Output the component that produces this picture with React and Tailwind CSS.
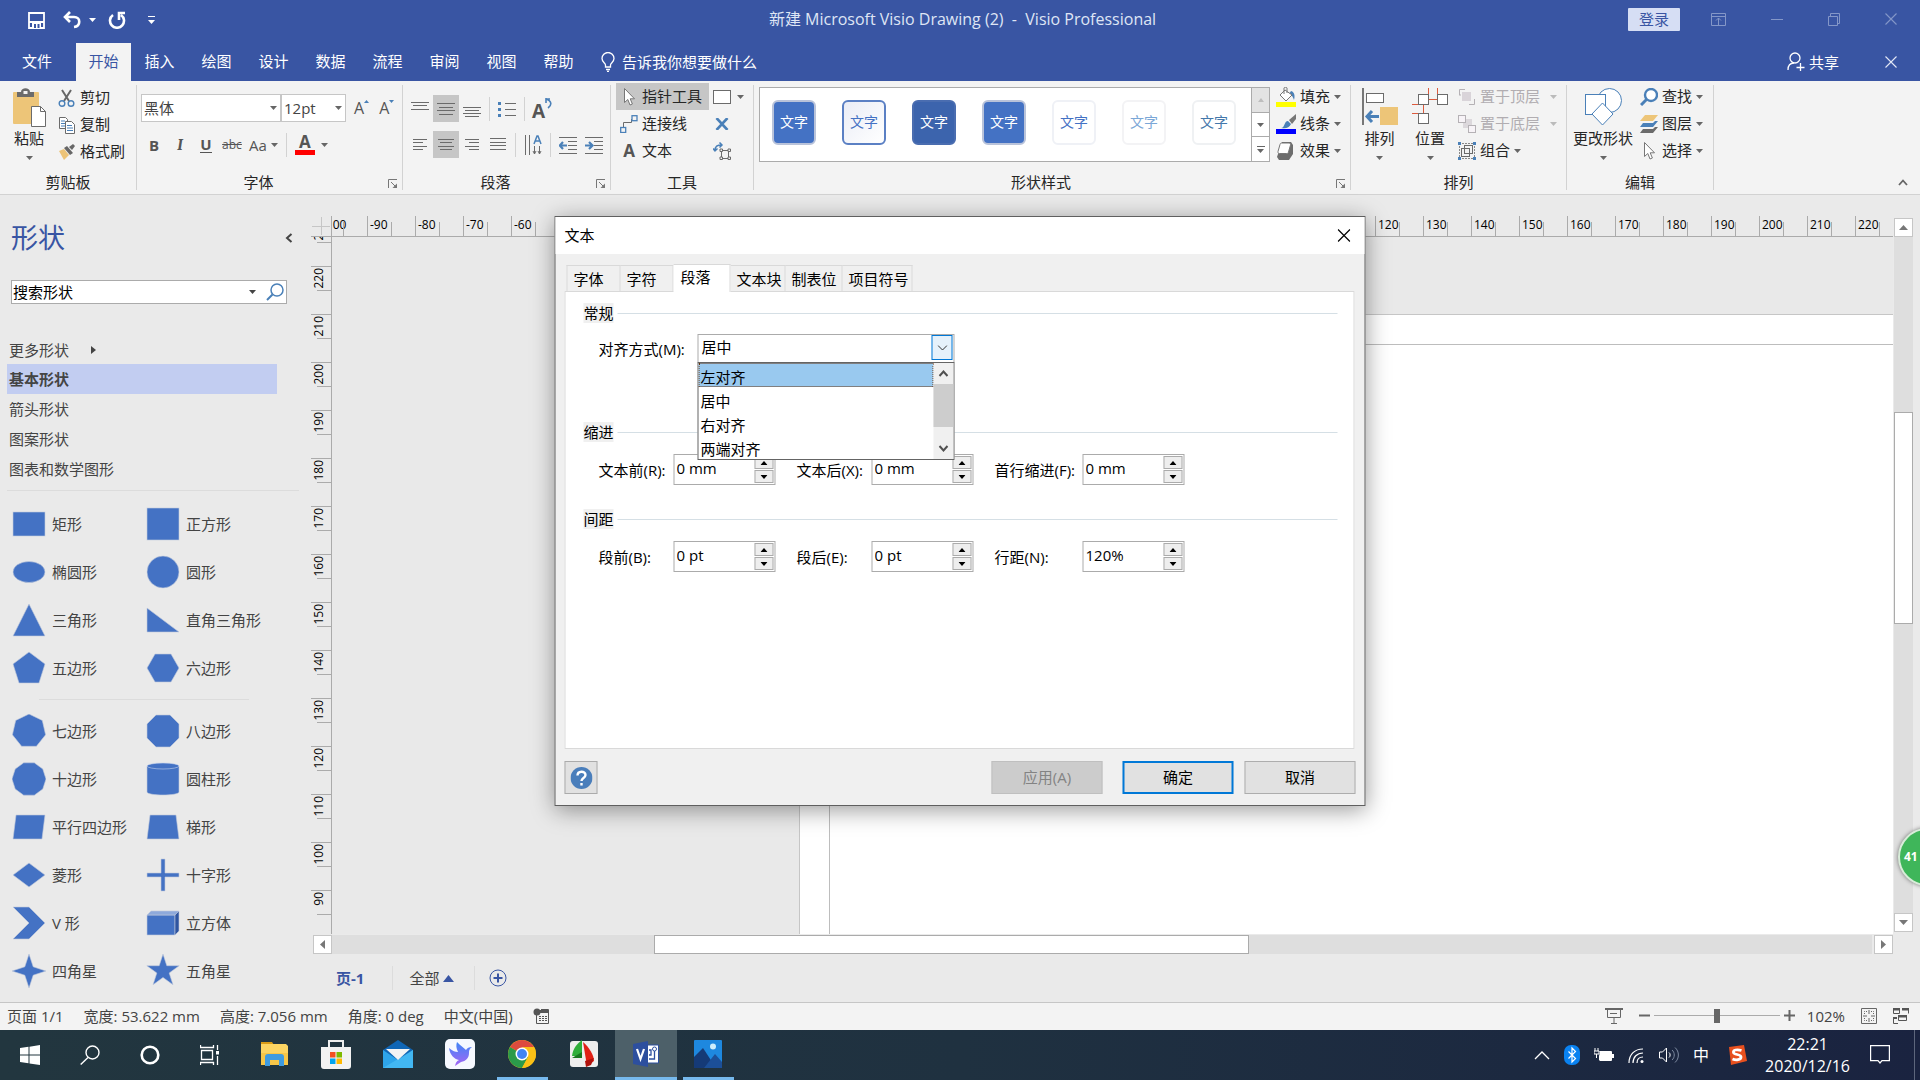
import React, { useState } from 'react';

const BLUE = '#4472c4';

// Small down arrow used all over the ribbon
const Caret = ({ color = '#666' }) => (
  <svg width="7" height="4" viewBox="0 0 7 4" className="shrink-0">
    <path d="M0 0h7L3.5 4z" fill={color} />
  </svg>
);

const Svg = ({ w = 18, h = 18, vb, children, className = '' }) => (
  <svg width={w} height={h} viewBox={vb || `0 0 ${w} ${h}`} fill="none" className={`shrink-0 ${className}`}>
    {children}
  </svg>
);

// --- Ribbon icons ---
const ScissorsIcon = () => (
  <Svg>
    <path d="M4 1l7 11M13 1L6 12" stroke="#666" strokeWidth="2" />
    <circle cx="4" cy="14.5" r="2.8" stroke="#4a80b8" strokeWidth="1.4" />
    <circle cx="13" cy="14.5" r="2.8" stroke="#4a80b8" strokeWidth="1.4" />
  </Svg>
);

const CopyIcon = () => (
  <Svg>
    <path d="M1.5 1.5h6l2 2v9h-8z" fill="#fff" stroke="#6b6b6b" />
    <path d="M3 5h4M3 7.5h4M3 10h4" stroke="#4a80b8" />
    <path d="M7.5 5.5h6l3 3v9h-9z" fill="#fff" stroke="#6b6b6b" />
    <path d="M9 9.5h5M9 12h6M9 14.5h6" stroke="#4a80b8" />
  </Svg>
);

const BrushIcon = () => (
  <Svg>
    <path d="M1 8l5-2 5 6-5 5z" fill="#ecc377" />
    <path d="M6 5l3-2 6 7-3 2z" fill="#666" />
    <path d="M11 4l4-3 2 2-3 4z" fill="#666" />
  </Svg>
);

const PasteIcon = () => (
  <Svg w={36} h={40}>
    <rect x="2" y="4" width="26" height="32" rx="1" fill="#edc578" />
    <path d="M6 4h4c0-5 9-5 9 0h4v5H6z" fill="#6b6b6b" />
    <rect x="12.5" y="3" width="4" height="3" fill="#f3f3f3" />
    <path d="M20.5 18.5h9l5 5v15h-14z" fill="#fff" stroke="#6b6b6b" />
    <path d="M29.5 18.5v5h5" stroke="#6b6b6b" />
  </Svg>
);

const LauncherIcon = () => (
  <Svg w={10} h={10}>
    <path d="M.5 9V.5H9" stroke="#777" />
    <path d="M3 3l4 4" stroke="#777" />
    <path d="M9 4.5V9H4.5z" fill="#777" />
  </Svg>
);

// Text lines: each entry is [x, y, width]
const Lines = ({ rows }) => (
  <Svg>
    <path d={rows.map(([x, y, w]) => `M${x} ${y}.5h${w}`).join('')} stroke="#6b6b6b" />
  </Svg>
);

const BulletsIcon = () => (
  <Svg>
    <path d="M7 3.5h11M7 9.5h11M7 15.5h11" stroke="#6b6b6b" />
    <path d="M0 2h3v3H0zM0 8h3v3H0zM0 14h3v3H0z" fill="#4a80b8" />
  </Svg>
);

const RotateTextIcon = () => (
  <span className="flex items-start">
    <span className="text-[19px] leading-5 pt-1 font-bold text-[#555]">A</span>
    <Svg w={7} h={12}>
      <path d="M1 1v5M1 2h4M1 2c6 2 6 6 2 9" stroke="#4a80b8" strokeWidth="1.6" />
    </Svg>
  </span>
);

const VerticalTextIcon = () => (
  <Svg w={18} h={20}>
    <path d="M1.5 0v20M5.5 0v20M10.5 11v8M15.5 11v8M9 16l1.5 3 1.5-3M14 16l1.5 3 1.5-3" stroke="#6b6b6b" />
    <path d="M10 9l3-8h1l3 8M11.5 6h4" stroke="#4a80b8" strokeWidth="1.5" />
  </Svg>
);

const IndentIcon = ({ right }) => (
  <Svg>
    <path d="M0 1.5h18M9 5.5h9M9 9.5h9M9 13.5h9M0 17.5h18" stroke="#6b6b6b" />
    <path d={right ? 'M0 9.5h7M4 6l3.5 3.5L4 13' : 'M1 9.5h7M4 6L.8 9.5 4 13'} stroke="#4a80b8" strokeWidth="2.2" />
  </Svg>
);

const PointerIcon = () => (
  <Svg w={18} h={20}>
    <path d="M4.5 1.5v14l3.3-3 2.2 5.5 2.4-1-2.2-5.2h4.3z" fill="#fff" stroke="#777" />
  </Svg>
);

const ConnectorIcon = () => (
  <Svg>
    <path d="M3.5 12V7.5h8V4" stroke="#6b6b6b" />
    <rect x=".7" y="12.5" width="5" height="5" stroke="#4a80b8" strokeWidth="1.3" />
    <rect x="12" y=".7" width="5" height="5" stroke="#4a80b8" strokeWidth="1.3" />
  </Svg>
);

const TransformIcon = () => (
  <Svg>
    <rect x="8.5" y="8.5" width="7" height="8" stroke="#6b6b6b" />
    <path d="M7 7h2.500v2.500H7zM15 7h2.500v2.500H15zM7 15h2.500v2.500H7zM15 15h2.500v2.500H15z" fill="#f3f3f3" stroke="#6b6b6b" />
    <path d="M2 9C2 4 4 3 9 3M6.5.5L9 3 6.5 5.5M0 6.5L2 9l2.5-2.5" stroke="#4a80b8" strokeWidth="1.5" />
  </Svg>
);

const FillIcon = () => (
  <Svg w={20} h={20}>
    <rect y="15" width="20" height="5" fill="#ffff00" />
    <path d="M15 4c4 1 4 6 3 9-1-3-2-5-5-6z" fill="#4a80b8" />
    <path d="M9 3l7 5-6 6-6-6z" fill="#fff" stroke="#777" />
    <path d="M8 7V1c0-1 3-1 3 0v5" stroke="#777" />
  </Svg>
);

const LineIcon = () => (
  <Svg w={20} h={20}>
    <rect y="15" width="20" height="5" fill="#0000ff" />
    <path d="M13 6l7-6v5l-4 5z" fill="#777" />
    <path d="M5 14c4 0 3-7 7-7l3 3c-2 4-5 5-10 4z" fill="#4a80b8" />
  </Svg>
);

const EffectIcon = () => (
  <Svg w={20} h={20}>
    <path d="M6 1h9l2 3v9l-4 6H3l-2-3z" fill="#6d6d6d" />
    <path d="M6 2h7c1 0 2 1 1.500 2l-2 7c0 1-1 1.500-2 1.500H3.500c-1 0-2-1-1.500-2l2-7C4 2.500 5 2 6 2z" fill="#fff" stroke="#777" />
  </Svg>
);

const AlignBigIcon = () => (
  <Svg w={36} h={38}>
    <path d="M1 0v37" stroke="#777" strokeWidth="2" />
    <rect x="4.5" y="5.5" width="17" height="9" fill="#fff" stroke="#6b6b6b" />
    <rect x="18" y="19" width="18" height="18" fill="#edc578" />
    <path d="M5 28.5h12M10 23l-5 5.5 5 5.5" stroke="#4a80b8" strokeWidth="3" />
  </Svg>
);

const PositionIcon = () => (
  <Svg w={36} h={38}>
    <path d="M16.5 0v6M25.5 0v6M16 11.5h10M0 16.5h6M0 25.5h6M11.5 17v9" stroke="#dc5b3e" />
    <rect x="6.5" y="6.5" width="10" height="10" fill="#fff" stroke="#6b6b6b" />
    <rect x="25.5" y="6.5" width="10" height="10" fill="#fff" stroke="#6b6b6b" />
    <rect x="6.5" y="25.5" width="10" height="10" fill="#fff" stroke="#6b6b6b" />
  </Svg>
);

const FrontIcon = () => (
  <Svg>
    <path d="M1.5 7V1.5H7M3 7H1M16.5 11v5.5H11" stroke="#b5b1b5" />
    <rect x="4" y="4" width="9" height="9" fill="#d9d4d9" />
  </Svg>
);

const BackIcon = () => (
  <Svg>
    <rect x="5" y="4" width="9" height="9" fill="#dcd8dc" />
    <rect x=".5" y=".5" width="7" height="7" fill="#f7f3f7" stroke="#b5b1b5" />
    <rect x="10.5" y="10.5" width="7" height="7" fill="#f7f3f7" stroke="#b5b1b5" />
  </Svg>
);

const GroupIcon = () => (
  <Svg>
    <path d="M1.5 1v16M16.5 1v16M1 1.5h16M1 16.5h16" stroke="#888" strokeDasharray="2 1" />
    <rect x="3.5" y="6.5" width="8" height="8" stroke="#6b6b6b" />
    <rect x="6.5" y="3.5" width="8" height="8" stroke="#6b6b6b" />
    <path d="M0 0h3v3H0zM15 0h3v3h-3zM0 15h3v3H0zM15 15h3v3h-3z" fill="#4a80b8" />
  </Svg>
);

const ChangeShapeIcon = () => (
  <Svg w={38} h={38}>
    <circle cx="25.5" cy="12.5" r="12" fill="#fff" stroke="#4a80b8" />
    <rect x="1.5" y="6.5" width="20" height="20" fill="#fff" stroke="#4a80b8" />
    <path d="M18.5 15l10.5 11-10.5 11L8 26z" fill="#fff" stroke="#4a80b8" />
  </Svg>
);

const FindIcon = ({ thin }) => (
  <Svg>
    <circle cx="11" cy="7" r="6" fill="#fff" stroke="#4a80b8" strokeWidth={thin ? 1.5 : 2.4} />
    <path d="M6.5 11.5L1 17" stroke="#4a80b8" strokeWidth={thin ? 2 : 3} />
  </Svg>
);

const LayersIcon = () => (
  <Svg>
    <path d="M5 0h13l-5 6H0z" fill="#edc578" />
    <path d="M0 12h13l5-6h-3l-2 2H3z" fill="#4a80b8" />
    <path d="M0 18h13l5-6h-3l-2 2H3z" fill="#6b6b6b" />
  </Svg>
);

const CloseIcon = ({ color, size = 12 }) => (
  <Svg w={size} h={size} vb="0 0 12 12">
    <path d="M.5.5l11 11M11.5.5l-11 11" stroke={color} strokeWidth="1.1" />
  </Svg>
);

// --- Ribbon building blocks ---
const Divider = () => <div className="w-px my-1 bg-[#d2d2d2] shrink-0" />;
const MiniDivider = () => <div className="w-px mx-1 h-6 bg-[#d2d2d2] shrink-0" />;

const Group = ({ label, launcher, className, children }) => (
  <>
    <section className={`flex flex-col shrink-0 ${className}`}>
      <div className="h-[90px] flex">{children}</div>
      <div className="h-[22px] flex items-center relative">
        <span className={`flex-1 text-center ${launcher ? 'pr-[22px]' : ''}`}>{label}</span>
        {launcher && (
          <button aria-label={`${label} 设置`} className="absolute right-1 bottom-1"><LauncherIcon /></button>
        )}
      </div>
    </section>
    <Divider />
  </>
);

const SmallButton = ({ icon, label, caret, disabled, active, className = '' }) => (
  <button
    disabled={disabled}
    className={`h-[27px] flex items-center gap-1 whitespace-nowrap ${active ? 'bg-[#c6c6c6]' : ''} ${disabled ? 'text-[#b1adb1]' : ''} ${className}`}
  >
    {icon}
    <span className="pb-px">{label}</span>
    {caret && <Caret color={disabled ? '#bbb' : '#666'} />}
  </button>
);

const BigButton = ({ icon, label, className = '' }) => (
  <button className={`flex flex-col items-center ${className}`}>
    <span className="h-[45px] pt-[7px] flex">{icon}</span>
    <span className="h-6 leading-6">{label}</span>
    <span className="h-4 flex items-center"><Caret /></span>
  </button>
);

const IconButton = ({ label, active, children }) => (
  <button aria-label={label} className={`w-[26px] h-[27px] flex items-center justify-center shrink-0 ${active ? 'bg-[#c6c6c6]' : ''}`}>
    {children}
  </button>
);

const ComboBox = ({ label, value, className }) => (
  <div className={`relative h-7 ${className}`}>
    <select aria-label={label} className="appearance-none w-full h-full bg-white border border-[#c6c6c6] pl-0.5 text-[#444] outline-none">
      <option>{value}</option>
    </select>
    <span className="absolute right-1 top-3 pointer-events-none"><Caret /></span>
  </div>
);

const tabs = ['插入', '绘图', '设计', '数据', '流程', '审阅', '视图', '帮助'];

const TitleBar = () => (
  <header className="bg-[#3955a3] text-white shrink-0">
    <div className="h-[43px] flex items-start">
      <div className="flex-1 flex items-center h-10 pl-7">
        <button aria-label="保存">
          <Svg w={17} h={17}>
            <path d="M1 1h15v15H1zM1 10h15" stroke="#fff" strokeWidth="1.8" />
            <path d="M4 10h9v6H4z" fill="#fff" />
            <path d="M6 12h2v4H6zM9.5 12h2v4h-2z" fill="#3955a3" />
          </Svg>
        </button>
        <button aria-label="撤消" className="ml-[18px] flex items-center gap-2">
          <Svg>
            <path d="M7 1L2 6l5 5M2 6h9c7 0 7 9 0 10" stroke="#fff" strokeWidth="2.6" />
          </Svg>
          <Caret color="#fff" />
        </button>
        <button aria-label="重复" className="ml-3">
          <Svg>
            <path d="M5 4a7 7 0 1 0 8 0M11 9V2h6" stroke="#fff" strokeWidth="2.6" />
          </Svg>
        </button>
        <button aria-label="自定义快速访问工具栏" className="ml-[22px]">
          <Svg w={7} h={8}><path d="M0 .5h7" stroke="#fff" /><path d="M0 4h7L3.5 8z" fill="#fff" /></Svg>
        </button>
      </div>
      <h1 className="h-[37px] flex items-center text-base text-[#dfe5f5] whitespace-pre">新建 Microsoft Visio Drawing (2)  -  Visio Professional</h1>
      <div className="flex-1 flex items-center justify-end h-[38px] pr-[23px] gap-[45px]">
        <button className="w-[52px] h-[23px] mr-[-14px] bg-[#d6def4] text-[#3955a3] leading-[22px] rounded-[1px]">登录</button>
        <button aria-label="功能区显示选项">
          <Svg w={15} h={13}><path d="M.5.5h14v12H.5zM1 3.5h14M7.5 12V5M5 7.5L7.5 5 10 7.5" stroke="#8497c8" /></Svg>
        </button>
        <button aria-label="最小化"><Svg w={12} h={12}><path d="M0 6.5h12" stroke="#8497c8" /></Svg></button>
        <button aria-label="还原"><Svg w={12} h={13}><path d="M.5 3.5h9v9h-9zM2.5 3V.5h9v10H10" stroke="#8497c8" /></Svg></button>
        <button aria-label="关闭"><CloseIcon color="#8497c8" /></button>
      </div>
    </div>
    <nav className="h-[38px] flex items-center">
      <button className="w-[74px] mr-0.5 h-full pb-0.5">文件</button>
      <button className="w-[55px] h-full pb-0.5 bg-[#f3f3f3] text-[#3955a3]">开始</button>
      {tabs.map((t) => (
        <button key={t} className="w-[57px] h-full pb-0.5">{t}</button>
      ))}
      <button className="flex items-center gap-1.5 ml-3.5 pb-px">
        <Svg w={15} h={20}>
          <path d="M4.5 15v-2C4.5 11 1 10 1 6.5a6 6 0 0 1 12 0C13 10 9.5 11 9.5 13v2zM5 17.5h4M6 19.5h2" stroke="#fff" strokeWidth="1.3" />
        </Svg>
        告诉我你想要做什么
      </button>
      <div className="flex-1" />
      <button className="flex items-center gap-1 mr-[46px]">
        <Svg w={18} h={20}>
          <circle cx="8" cy="6" r="5" stroke="#fff" strokeWidth="1.3" />
          <path d="M1 18c0-4 2-7 6-7M13.5 11v8M9.5 15.5h8" stroke="#fff" strokeWidth="1.3" />
        </Svg>
        共享
      </button>
      <button aria-label="关闭文档" className="mr-[23px]"><CloseIcon color="#e4e9f6" /></button>
    </nav>
  </header>
);

const styleTiles = [
  'bg-[#4472c4] text-white border-[#b9c3da]',
  'bg-linear-to-br from-[#eaedf6] to-white text-[#4472c4] border-[#5b80c4]',
  'bg-[#3c64ad] text-white border-[#4a6db0]',
  'bg-[#4472c4] text-white border-[#b9c3da]',
  'bg-white text-[#4472c4] border-[#eff1f6]',
  'bg-white text-[#7ba7d7] border-[#f3f3f5]',
  'bg-white text-[#4478ab] border-[#eff1f3]',
];

const Ribbon = () => (
  <div className="h-[114px] bg-[#f3f3f3] border-b border-[#d2d2d2] flex text-[#262626] shrink-0">
    <Group label="剪贴板" className="w-[136px]">
      <BigButton icon={<PasteIcon />} label="粘贴" className="w-[42px] ml-2" />
      <div className="pt-[3px] pl-2">
        <SmallButton icon={<ScissorsIcon />} label="剪切" />
        <SmallButton icon={<CopyIcon />} label="复制" />
        <SmallButton icon={<BrushIcon />} label="格式刷" />
      </div>
    </Group>

    <Group label="字体" launcher className="w-[265px]">
      <div className="pt-[13px] pl-1 flex flex-col gap-[9px]">
        <div className="flex">
          <ComboBox label="字体" value="黑体" className="w-[140px]" />
          <ComboBox label="字号" value="12pt" className="w-[65px]" />
          <button aria-label="增大字号" className="flex items-center ml-2">
            <span className="text-base text-[#555]">A</span>
            <Svg w={5} h={20}><path d="M0 5l2.5-3L5 5z" fill="#4a80b8" /></Svg>
          </button>
          <button aria-label="减小字号" className="flex items-center ml-2.5">
            <span className="text-base text-[#555]">A</span>
            <Svg w={5} h={20}><path d="M0 2l2.5 3L5 2z" fill="#4a80b8" /></Svg>
          </button>
        </div>
        <div className="flex items-center text-[#555]">
          <IconButton label="加粗"><b>B</b></IconButton>
          <IconButton label="倾斜"><i className="font-serif font-bold text-base">I</i></IconButton>
          <IconButton label="下划线"><b className="border-b border-[#555] leading-4">U</b></IconButton>
          <IconButton label="删除线"><s className="text-xs">abc</s></IconButton>
          <button className="h-[27px] flex items-center gap-1 px-1">Aa <Caret /></button>
          <MiniDivider />
          <button aria-label="字体颜色" className="h-[27px] flex items-center gap-1.5 pl-1">
            <span className="w-5 border-b-5 border-[#f00] leading-4 text-[17px] font-bold">A</span>
            <Caret />
          </button>
        </div>
      </div>
    </Group>

    <Group label="段落" launcher className="w-[207px]">
      <div className="pt-3.5 pl-1 flex flex-col gap-[9px]">
        <div className="flex items-center">
          <IconButton label="顶端对齐"><Lines rows={[[0, 2, 18], [2, 5, 14], [0, 9, 18]]} /></IconButton>
          <IconButton label="中部对齐" active><Lines rows={[[0, 3, 18], [2, 7, 14], [0, 10, 18], [2, 14, 14]]} /></IconButton>
          <IconButton label="底端对齐"><Lines rows={[[0, 7, 18], [2, 10, 14], [0, 13, 18], [2, 16, 14]]} /></IconButton>
          <MiniDivider />
          <IconButton label="项目符号"><BulletsIcon /></IconButton>
          <MiniDivider />
          <IconButton label="旋转文本"><RotateTextIcon /></IconButton>
        </div>
        <div className="flex items-center">
          <IconButton label="左对齐"><Lines rows={[[2, 3, 14], [2, 6, 10], [2, 10, 14], [2, 13, 10]]} /></IconButton>
          <IconButton label="居中" active><Lines rows={[[1, 3, 16], [3, 6, 12], [1, 10, 16], [3, 13, 12]]} /></IconButton>
          <IconButton label="右对齐"><Lines rows={[[2, 3, 14], [6, 6, 10], [2, 10, 14], [6, 13, 10]]} /></IconButton>
          <IconButton label="两端对齐"><Lines rows={[[1, 2, 16], [1, 6, 16], [1, 9, 16], [1, 13, 16]]} /></IconButton>
          <MiniDivider />
          <IconButton label="垂直文本"><VerticalTextIcon /></IconButton>
          <MiniDivider />
          <IconButton label="减少缩进量"><IndentIcon /></IconButton>
          <IconButton label="增加缩进量"><IndentIcon right /></IconButton>
        </div>
      </div>
    </Group>

    <Group label="工具" className="w-[142px]">
      <div className="pt-0.5 pl-[5px] flex items-start">
        <div className="w-[93px]">
          <SmallButton icon={<PointerIcon />} label="指针工具" active className="w-full pl-1" />
          <SmallButton icon={<ConnectorIcon />} label="连接线" className="pl-1" />
          <SmallButton icon={<b className="w-[18px] text-[17px] text-[#555]">A</b>} label="文本" className="pl-1" />
        </div>
        <div className="pl-1">
          <button aria-label="矩形" className="h-[27px] flex items-center gap-1.5">
            <Svg w={18} h={14}><rect x=".5" y=".5" width="17" height="13" fill="#fff" stroke="#6b6b6b" /></Svg>
            <Caret />
          </button>
          <button aria-label="连接点" className="h-[27px] flex items-center pl-0.5">
            <Svg w={14} h={12}><path d="M1.5 0l11 12M12.5 0l-11 12" stroke="#4a80b8" strokeWidth="2.6" /></Svg>
          </button>
          <button aria-label="文本块" className="h-[27px] flex items-center"><TransformIcon /></button>
        </div>
      </div>
    </Group>

    <Group label="形状样式" launcher className="w-[596px]">
      <div className="pt-1.5 pl-[5px] flex">
        <div className="h-[75px] w-[511px] flex border border-[#ababab] bg-white">
          <div className="flex-1 flex items-center gap-[26px] pl-3 pb-1">
            {styleTiles.map((c, i) => (
              <button key={i} className={`w-11 h-[45px] pb-0.5 rounded-md border-2 text-sm ${c}`}>文字</button>
            ))}
          </div>
          <div className="w-[18px] flex flex-col border-l border-[#ababab]">
            <button aria-label="上一行" disabled className="flex-1 flex items-center justify-center bg-[#e3e3e3]">
              <Svg w={6} h={4}><path d="M0 4l3-4 3 4z" fill="#bdbdbd" /></Svg>
            </button>
            <button aria-label="下一行" className="flex-1 flex items-center justify-center border-y border-[#ababab]"><Caret /></button>
            <button aria-label="其他样式" className="flex-1 flex flex-col gap-0.5 items-center justify-center">
              <span className="w-2 h-px bg-[#666]" />
              <Caret />
            </button>
          </div>
        </div>
      </div>
      <div className="pt-0.5 pl-1.5">
        <SmallButton icon={<FillIcon />} label="填充" caret />
        <SmallButton icon={<LineIcon />} label="线条" caret />
        <SmallButton icon={<EffectIcon />} label="效果" caret />
      </div>
    </Group>

    <Group label="排列" className="w-[215px]">
      <BigButton icon={<AlignBigIcon />} label="排列" className="w-[51px] ml-[3px]" />
      <BigButton icon={<PositionIcon />} label="位置" className="w-[50px]" />
      <div className="pt-0.5 pl-[3px]">
        <SmallButton icon={<FrontIcon />} label={<span className="mr-1.5">置于顶层</span>} caret disabled />
        <SmallButton icon={<BackIcon />} label={<span className="mr-1.5">置于底层</span>} caret disabled />
        <SmallButton icon={<GroupIcon />} label="组合" caret />
      </div>
    </Group>

    <Group label="编辑" className="w-[146px]">
      <BigButton icon={<ChangeShapeIcon />} label="更改形状" className="w-[66px] ml-[3px]" />
      <div className="pt-0.5 pl-1">
        <SmallButton icon={<FindIcon />} label="查找" caret />
        <SmallButton icon={<LayersIcon />} label="图层" caret />
        <SmallButton icon={<PointerIcon />} label="选择" caret />
      </div>
    </Group>

    <div className="flex-1 flex items-end justify-end pr-3 pb-2">
      <button aria-label="折叠功能区">
        <Svg w={10} h={7}><path d="M1 6l4-4.5L9 6" stroke="#666" strokeWidth="1.8" /></Svg>
      </button>
    </div>
  </div>
);

// --- Shapes panel ---
const polygon = (n, rot = -90, r = 17) =>
  Array.from({ length: n }, (_, i) => {
    const a = ((rot + (360 / n) * i) * Math.PI) / 180;
    return `${(17 + r * Math.cos(a)).toFixed(1)},${(17 + r * Math.sin(a)).toFixed(1)}`;
  }).join(' ');

const star = (n, inner) =>
  Array.from({ length: n * 2 }, (_, i) => {
    const a = ((-90 + (180 / n) * i) * Math.PI) / 180;
    const r = i % 2 ? inner : 17;
    return `${(17 + r * Math.cos(a)).toFixed(1)},${(17 + r * Math.sin(a)).toFixed(1)}`;
  }).join(' ');

const shapesTop = [
  ['矩形', <rect x="1" y="5" width="32" height="24" />],
  ['正方形', <rect x="1" y="1" width="32" height="32" />],
  ['椭圆形', <ellipse cx="17" cy="17" rx="16" ry="10.5" />],
  ['圆形', <circle cx="17" cy="17" r="16" />],
  ['三角形', <polygon points="17,1 33,33 1,33" />],
  ['直角三角形', <polygon points="1,5 33,29 1,29" />],
  ['五边形', <polygon points="17,1 33,13 27,32 7,32 1,13" />],
  ['六边形', <polygon points="9,3 25,3 33,17 25,31 9,31 1,17" />],
];

const shapesBottom = [
  ['七边形', <polygon points={polygon(7)} />],
  ['八边形', <polygon points="10,1 24,1 33,10 33,24 24,33 10,33 1,24 1,10" />],
  ['十边形', <polygon points={polygon(10, -72)} />],
  ['圆柱形', <g><path d="M1 4v26c0 4 32 4 32 0V4z" /><ellipse cx="17" cy="4" rx="16" ry="3" stroke="#c5d2ec" /></g>],
  ['平行四边形', <polygon points="4,5 33,5 30,29 1,29" />],
  ['梯形', <polygon points="4,5 30,5 33,29 1,29" />],
  ['菱形', <polygon points="17,5 33,17 17,29 1,17" />],
  ['十字形', <path d="M15 1h4v14h14v4H19v14h-4V19H1v-4h14z" />],
  ['V 形', <polygon points="1,1 17,1 33,17 17,33 1,33 17,17" />],
  ['立方体', <g><path d="M1 9h28v20H1z" /><path d="M1 9l4-4h28l-4 4z" fill="#8ea9db" /><path d="M29 9l4-4v20l-4 4z" fill="#2f55a0" /></g>],
  ['四角星', <polygon points={star(4, 6)} />],
  ['五角星', <polygon points={star(5, 6.5)} />],
];

const ShapeGrid = ({ items }) => (
  <ul className="grid grid-cols-[134px_1fr] pl-3">
    {items.map(([name, shape]) => (
      <li key={name} className="h-12 flex items-center gap-1.5 whitespace-nowrap">
        <Svg w={34} h={34}><g fill={BLUE} stroke="#c3cbdc" strokeWidth=".6">{shape}</g></Svg>
        {name}
      </li>
    ))}
  </ul>
);

const stencils = ['基本形状', '箭头形状', '图案形状', '图表和数学图形'];

const ShapesPanel = () => (
  <aside className="w-[311px] shrink-0 text-[#444] overflow-hidden">
    <div className="flex items-center justify-between pl-[11px] pr-[18px] pt-5">
      <h2 className="text-[27px] leading-[46px] text-[#3955a3]">形状</h2>
      <button aria-label="折叠形状窗口">
        <Svg w={8} h={10}><path d="M6.5 1L2 5l4.5 4" stroke="#444" strokeWidth="2" /></Svg>
      </button>
    </div>
    <div className="ml-[11px] mr-6 mt-[19px] h-6 flex items-center bg-white border border-[#ababab]">
      <input aria-label="搜索形状" defaultValue="搜索形状" className="flex-1 min-w-0 pl-px text-black outline-none" />
      <button aria-label="搜索选项" className="px-2.5"><Caret color="#444" /></button>
      <button aria-label="搜索" className="pr-0.5"><FindIcon thin /></button>
    </div>
    <ul className="mt-[31px] pl-[7px]">
      <li className="h-[29px] flex items-center gap-[22px] pl-0.5">
        更多形状
        <Svg w={5} h={8}><path d="M0 0l5 4-5 4z" fill="#444" /></Svg>
      </li>
      {stencils.map((s, i) => (
        <li key={s} className={`h-[30px] w-[270px] flex items-center pl-0.5 ${i === 0 ? 'bg-[#c2cdf1] font-bold' : ''}`}>{s}</li>
      ))}
    </ul>
    <hr className="ml-[7px] mr-3 mt-1.5 mb-[9px] border-[#dcdcdc]" />
    <ShapeGrid items={shapesTop} />
    <hr className="ml-[39px] mr-[62px] my-[7px] border-[#dcdcdc]" />
    <ShapeGrid items={shapesBottom} />
  </aside>
);

// --- Drawing area ---
const hMarks = Array.from({ length: 33 }, (_, i) => -100 + i * 10);
const vMarks = Array.from({ length: 15 }, (_, i) => 230 - i * 10);

const ScrollButton = ({ d, label }) => (
  <button aria-label={label} className="w-[19px] h-[19px] shrink-0 bg-white border border-[#c6c6c6] flex items-center justify-center">
    <Svg w={9} h={9}><path d={d} fill="#777" /></Svg>
  </button>
);

const Workspace = () => (
  <main className="flex-1 min-w-0 flex flex-col">
    <div className="flex-1 min-h-0 flex pt-[21px]">
      <div className="w-[21px] shrink-0 flex flex-col border-r border-[#ababab]">
        <div className="h-[21px] shrink-0 border-b border-[#ababab] flex justify-center">
          <Svg w={20} h={20}><path d="M1 10.5h18M10.5 1v18" stroke="#c6c6c6" /></Svg>
        </div>
        <div className="flex-1 min-h-0 overflow-hidden text-xs">
          <div className="-mt-[19px]">
            {vMarks.map((m) => (
              <div key={m} className="h-12 flex flex-col items-end">
                <div className="h-6 w-full shrink-0 border-t border-[#ababab] flex items-start pl-0.5">
                  <span className="[writing-mode:vertical-rl] rotate-180 leading-3 pb-px">{m}</span>
                </div>
                <div className="h-6 w-3.5 border-t border-[#ababab]" />
              </div>
            ))}
          </div>
        </div>
      </div>
      <div className="flex-1 min-w-0 flex flex-col">
        <div className="h-[21px] shrink-0 border-b border-[#ababab] overflow-hidden text-xs">
          <div className="flex -ml-[13px] h-full">
            {hMarks.map((m) => (
              <div key={m} className="w-12 shrink-0 flex items-end">
                <div className="w-6 h-full border-l border-[#ababab] pl-0.5 leading-[18px]">{m}</div>
                <div className="w-6 h-3.5 border-l border-[#ababab]" />
              </div>
            ))}
          </div>
        </div>
        <div className="flex-1 min-h-0 flex pl-[467px] pt-[77px] bg-[#e9e9e9]">
          <div className="flex-1 flex bg-white border-l border-t border-[#c6c6c6] pl-[29px] pt-[29px]">
            <div className="flex-1 border-l border-t border-[#bdbdbd]" />
          </div>
        </div>
      </div>
      <div className="w-[19px] ml-px mr-[7px] mt-0.5 mb-0.5 shrink-0 flex flex-col bg-[#dedede]">
        <ScrollButton label="向上滚动" d="M0 7l4.5-5L9 7z" />
        <div className="flex-[176]" />
        <div className="flex-[210] bg-white border border-[#ababab]" />
        <div className="flex-[290]" />
        <ScrollButton label="向下滚动" d="M0 2l4.5 5L9 2z" />
      </div>
    </div>
    <div className="h-5 shrink-0 flex items-center pl-0.5 mr-[27px]">
      <ScrollButton label="向左滚动" d="M7 0L2 4.5 7 9z" />
      <div className="flex-1 h-[19px] flex bg-[#dedede] mr-0.5">
        <div className="flex-[323]" />
        <div className="flex-[594] bg-white border border-[#ababab]" />
        <div className="flex-[624]" />
      </div>
      <ScrollButton label="向右滚动" d="M2 0l5 4.5L2 9z" />
    </div>
    <div className="h-12 shrink-0 flex items-center pl-[25px] text-[#444]">
      <button className="font-bold text-[#3955a3]">页-1</button>
      <div className="w-px h-6 bg-[#dcdcdc] ml-7 mr-4" />
      <button className="flex items-center gap-1">
        全部
        <Svg w={11} h={7}><path d="M0 7l5.5-7L11 7z" fill="#3955a3" /></Svg>
      </button>
      <div className="w-px h-6 bg-[#dcdcdc] ml-5 mr-3.5" />
      <button aria-label="插入页">
        <Svg><circle cx="9" cy="9" r="8" stroke="#3955a3" /><path d="M9 4.5v9M4.5 9h9" stroke="#3955a3" strokeWidth="2" /></Svg>
      </button>
    </div>
  </main>
);

const StatusBar = () => (
  <footer className="h-7 shrink-0 bg-[#f3f3f3] border-t border-[#c6c6c6] flex items-center text-[#444] pl-[7px] pr-[11px] pb-0.5">
    <div className="flex items-center gap-5 whitespace-nowrap">
      <span>页面 1/1</span>
      <span>宽度: 53.622 mm</span>
      <span>高度: 7.056 mm</span>
      <span>角度: 0 deg</span>
      <span>中文(中国)</span>
      <button aria-label="宏录制">
        <Svg w={16} h={16}>
          <path d="M3.5 3v12.5h12v-14H8" stroke="#555" />
          <path d="M7 2h8v3H7z" fill="#555" />
          <circle cx="4" cy="4" r="3.5" fill="#555" />
          <path d="M6 8.5h8M6 10.5h8M6 12.5h8" stroke="#555" strokeDasharray="2 1" />
        </Svg>
      </button>
    </div>
    <div className="flex-1" />
    <button aria-label="演示模式">
      <Svg w={18} h={16}>
        <path d="M0 1h18" stroke="#666" strokeWidth="2" />
        <path d="M2.5 2v7.5h13V2M5 5.5h7M9 10v5M6 15.5h6" stroke="#666" />
      </Svg>
    </button>
    <button aria-label="缩小" className="ml-4"><Svg w={11} h={11}><path d="M0 5.5h11" stroke="#666" strokeWidth="2" /></Svg></button>
    <input
      type="range"
      aria-label="缩放"
      defaultValue="50"
      className="appearance-none w-[126px] h-px mx-1 bg-[#ababab] [&::-webkit-slider-thumb]:appearance-none [&::-webkit-slider-thumb]:w-1.5 [&::-webkit-slider-thumb]:h-3.5 [&::-webkit-slider-thumb]:bg-[#666]"
    />
    <button aria-label="放大"><Svg w={11} h={11}><path d="M0 5.5h11M5.500 0v11" stroke="#666" strokeWidth="2" /></Svg></button>
    <button className="ml-3">102%</button>
    <button aria-label="调整页面以适合当前窗口" className="ml-4">
      <Svg w={16} h={16}>
        <path d="M.5.5h15v15H.5zM8 2v4M8 10v4M2 8h4M10 8h4" stroke="#666" />
        <path d="M3.5 6V3.5H6M10 3.5h2.5V6M12.5 10v2.5H10M6 12.5H3.5V10" stroke="#666" strokeDasharray="1 1" />
      </Svg>
    </button>
    <button aria-label="切换窗口" className="ml-4">
      <Svg w={16} h={16}>
        <path d="M.5.5h6v5h-6zM9.5.5h6v5M5.5 7.5h8v5h-8zM.5 9v6.5H5" stroke="#555" />
        <path d="M0 0h7v2.500H0zM9 0h7v2.500H9zM5 7h9v2.500H5zM0 9h4v2H0z" fill="#555" />
      </Svg>
    </button>
  </footer>
);

// --- Windows taskbar ---
const SystemButton = ({ label, children }) => (
  <button aria-label={label} className="w-[60px] h-full flex items-center justify-center">{children}</button>
);

const TaskButton = ({ label, running, active, children }) => (
  <button aria-label={label} className="w-[62px] h-full flex justify-center">
    <span className={`h-full flex items-center justify-center border-b-3 ${active ? 'w-full bg-[#4d6069] border-[#76b9ed]' : running ? 'w-[51px] border-[#76b9ed]' : 'w-full border-transparent'}`}>
      {children}
    </span>
  </button>
);

const Taskbar = () => (
  <div className="h-[50px] shrink-0 bg-linear-to-r from-[#22363f] via-[#1f3140] to-[#1a2340] flex items-center text-white">
    <div className="flex h-full">
      <SystemButton label="开始">
        <Svg w={20} h={20}><path d="M0 3l8.500-1.200v7.700H0zM9.500 1.700L20 0v9.500H9.500zM0 10.500h8.500v7.700L0 17zM9.500 10.500H20V20L9.500 18.400z" fill="#fff" /></Svg>
      </SystemButton>
      <SystemButton label="搜索">
        <Svg w={20} h={20}><circle cx="12.5" cy="7.5" r="6.5" stroke="#fff" strokeWidth="1.4" /><path d="M8 12.5L.7 19.5" stroke="#fff" strokeWidth="1.4" /></Svg>
      </SystemButton>
      <SystemButton label="Cortana">
        <Svg w={20} h={20}><circle cx="10" cy="10" r="8.3" stroke="#fff" strokeWidth="2.6" /></Svg>
      </SystemButton>
      <SystemButton label="任务视图">
        <Svg w={20} h={20}>
          <path d="M1.5 5.5h11v9h-11zM.5 0v2.5h13V0M.5 20v-2.5h13V20M17.5 0v5M17.5 11v9" stroke="#fff" strokeWidth="1.3" />
          <path d="M16 6h3v3.5h-3z" fill="#fff" />
        </Svg>
      </SystemButton>
    </div>
    <div className="flex h-full ml-[3px]">
      <TaskButton label="文件资源管理器">
        <Svg w={28} h={24}>
          <path d="M1 0h11l2 3h-13z" fill="#d99b16" />
          <path d="M1 2h25l2 2v19H1z" fill="#fcd462" />
          <path d="M1 11h27v12H1z" fill="#f7c648" />
          <path d="M5 24V15c0-2 1-3 3-3h13c2 0 3 1 3 3v9h-5v-6h-9v6z" fill="#3f9be0" />
        </Svg>
      </TaskButton>
      <TaskButton label="Microsoft Store">
        <Svg w={30} h={30}>
          <path d="M8 8V2h14v6" stroke="#eee" strokeWidth="2" />
          <path d="M0 8h30v19c0 2-1 3-3 3H3c-2 0-3-1-3-3z" fill="#f2f2f2" />
          <path d="M9 13h5.500v5.500H9z" fill="#f25022" /><path d="M15.500 13H21v5.500h-5.500z" fill="#7fba00" />
          <path d="M9 19.500h5.500V25H9z" fill="#00a4ef" /><path d="M15.500 19.500H21V25h-5.500z" fill="#ffb900" />
        </Svg>
      </TaskButton>
      <TaskButton label="邮件">
        <Svg w={30} h={28}>
          <path d="M0 10L15 0l15 10v18H0z" fill="#1066b5" />
          <path d="M0 10l15 10 15-10v18H0z" fill="#2ea5ea" />
          <path d="M30 10v18H0z" fill="#50c3f7" opacity=".6" />
          <path d="M3 9h24L15 20z" fill="#f4f4f4" />
        </Svg>
      </TaskButton>
      <TaskButton label="迅雷">
        <Svg w={30} h={30}>
          <defs>
            <linearGradient id="bird" x1="0" y1="0" x2="0" y2="1">
              <stop stopColor="#3f86f5" />
              <stop offset="1" stopColor="#a566f5" />
            </linearGradient>
          </defs>
          <rect width="30" height="30" rx="5" fill="#f6f9ff" />
          <path d="M4 9c4 3 6 4 9 4-2-4-2-7-1-10 4 4 7 6 9 8 1-2 3-3 6-3-3 2-3 4-3 6 0 5-3 8-8 9l-6 4c1-4 2-5 4-6-5-1-9-5-10-12z" fill="url(#bird)" />
        </Svg>
      </TaskButton>
      <TaskButton label="Chrome" running>
        <Svg w={28} h={28}>
          <circle cx="14" cy="14" r="14" fill="#fbc116" />
          <path d="M14 14L1.900 7A14 14 0 0 1 26.100 7z" fill="#dd4b3e" />
          <path d="M14 14L1.900 7A14 14 0 0 0 14 28l6-11z" fill="#2b9a4a" />
          <path d="M14 7h12.100A14 14 0 0 1 14 28l6-11z" fill="#fbc116" />
          <circle cx="14" cy="14" r="6.5" fill="#fff" /><circle cx="14" cy="14" r="5" fill="#4285f4" />
        </Svg>
      </TaskButton>
      <TaskButton label="FastStone Capture">
        <Svg w={28} h={28}>
          <rect y="1" width="28" height="26" rx="3" fill="#eee" />
          <path d="M2 16C3 8 7 4 12 0v16z" fill="#2fae3a" /><path d="M2 18l10-6v6z" fill="#17781f" />
          <path d="M13 2c6 5 11 13 11 19l-7 5z" fill="#e02015" /><path d="M15 21l9-3-3 7-5 2z" fill="#b0120c" />
        </Svg>
      </TaskButton>
      <TaskButton label="Visio" active>
        <Svg w={26} h={26}>
          <path d="M13 4h12.500v18H13z" fill="#fff" stroke="#2d4f9e" />
          <path d="M0 3l15-3v26L0 23z" fill="#2d4f9e" />
          <path d="M4 8l3.500 10L11 8" stroke="#fff" strokeWidth="2.2" />
          <circle cx="21.500" cy="8" r="2" stroke="#2d4f9e" />
          <path d="M21.500 10v8H16M16 9h2v5h-2" stroke="#2d4f9e" strokeWidth="1.300" />
        </Svg>
      </TaskButton>
      <TaskButton label="照片" running>
        <Svg w={28} h={28}>
          <rect width="28" height="28" rx="1" fill="#1e88df" />
          <path d="M0 17l9-9 13 20H0z" fill="#153a77" /><path d="M10 28l11-14 7 8v6z" fill="#1c4f98" />
          <circle cx="19" cy="6.5" r="3" fill="#cdeefc" />
        </Svg>
      </TaskButton>
    </div>
    <div className="flex-1" />
    <div className="flex items-center gap-3.5">
      <Svg w={16} h={10}><path d="M1 9l7-7 7 7" stroke="#fff" strokeWidth="1.3" /></Svg>
      <Svg w={16} h={20}><rect width="16" height="20" rx="7" fill="#0a82f0" /><path d="M4.5 6.5l7 7L8 17V3l3.5 3.5-7 7" stroke="#fff" strokeWidth="1.2" /></Svg>
      <Svg w={20} h={14}><path d="M1 0v3M4 0v3M0 3h5v3H0zM2.5 6v4M5.5 3.5h12v9h-12" stroke="#fff" /><path d="M6 4h11v8H5V8zM18 6h2v4h-2z" fill="#fff" /></Svg>
      <Svg w={17} h={17}>
        <circle cx="14" cy="14.5" r="1.5" fill="#fff" />
        <path d="M9 16c0-4 2-6 6-6M5 16C5 10 9 6 15 6M1 16C1 7 7 2 15 2" stroke="#fff" strokeWidth="1.2" />
      </Svg>
      <Svg w={20} h={18}>
        <path d="M.5 6h3l4-4v14l-4-4h-3z" stroke="#fff" />
        <path d="M10 6.5c1.5 1 1.5 4 0 5" stroke="#fff" />
        <path d="M13 4c3 2.5 3 7.5 0 10M16 1.500c4.500 4 4.500 11 0 15" stroke="#7d8aa0" />
      </Svg>
      <span className="text-base">中</span>
      <Svg w={20} h={20} className="ml-1">
        <path d="M2 2l15-2 3 16-16 4z" fill="#e8501e" />
        <path d="M14.5 5.5C10 4 6 5 6.500 7.500S14 9 14 12s-5 3.500-8.500 2" stroke="#fff" strokeWidth="2.8" />
      </Svg>
      <div className="text-base text-center ml-1 leading-[22px]">
        <div>22:21</div>
        <div>2020/12/16</div>
      </div>
      <Svg w={20} h={20} className="ml-1.5"><path d="M.6.6h18.800v15H12L10 18l-2-2.400H.6z" stroke="#fff" strokeWidth="1.2" /></Svg>
    </div>
    <div className="w-px h-full ml-6 mr-[5px] bg-[#5d667c]" />
  </div>
);

// --- Text dialog ---
const Legend = ({ children }) => (
  <div className="flex items-center gap-1 h-[22px]">
    <span className="bg-[#f0f0f0] leading-5">{children}</span>
    <div className="flex-1 h-px bg-[#d5dfe5]" />
  </div>
);

const SpinButton = ({ label, d }) => (
  <button aria-label={label} className="h-[13px] w-[19px] bg-[#eee] border border-[#ababab] flex items-center justify-center">
    <Svg w={7} h={4}><path d={d} fill="#000" /></Svg>
  </button>
);

const Spinner = ({ id, label, value, labelWidth }) => (
  <div className="flex items-center">
    <label htmlFor={id} className={`${labelWidth} whitespace-nowrap`}>{label}</label>
    <div className="w-[102px] h-[31px] flex bg-white border border-[#ababab] p-px">
      <input id={id} defaultValue={value} className="flex-1 min-w-0 pl-px pb-1 outline-none" />
      <div className="flex flex-col gap-px">
        <SpinButton label={`${label} 增加`} d="M0 4l3.500-4L7 4z" />
        <SpinButton label={`${label} 减少`} d="M0 0l3.500 4L7 0z" />
      </div>
    </div>
  </div>
);

const dialogTabs = [
  ['字体', 'w-[54px]'],
  ['字符', 'w-[53px]'],
  ['段落', 'w-[57px]'],
  ['文本块', 'w-[55px]'],
  ['制表位', 'w-[57px]'],
  ['项目符号', 'w-[70px]'],
];

const alignments = ['左对齐', '居中', '右对齐', '两端对齐'];

const TextDialog = () => {
  const [tab, setTab] = useState('段落');
  const [picked, setPicked] = useState('左对齐');

  return (
    <div role="dialog" aria-label="文本" className="absolute top-[216px] left-1/2 -translate-x-1/2 w-[811px] bg-[#f0f0f0] border border-[#5f5f5f] shadow-[0_4px_22px_rgba(0,0,0,0.4)] text-black">
      <div className="h-[37px] bg-white flex items-center justify-between pl-[9px] pr-3.5">
        <span className="pb-0.5">文本</span>
        <button aria-label="关闭"><CloseIcon color="#000" size={13} /></button>
      </div>
      <div className="px-[9px] pt-2.5">
        <div role="tablist" className="flex items-end pl-0.5">
          {dialogTabs.map(([name, width]) => (
            <button
              key={name}
              role="tab"
              aria-selected={tab === name}
              onClick={() => setTab(name)}
              className={`${width} text-left border-t border-r border-[#d9d9d9] ${tab === name ? 'h-7 -mb-px pb-1 pl-[7px] bg-white z-10' : 'h-[26px] pl-1.5'} first:border-l`}
            >
              {name}
            </button>
          ))}
        </div>
        <div className="h-[458px] mr-px bg-white border border-[#d9d9d9] pl-[18px] pr-4 pt-2.5">
          <Legend>常规</Legend>
          <div className="flex pl-[15px] pt-2.5 h-[97px]">
            <label htmlFor="align" className="w-[99px] leading-[31px]">对齐方式(M):</label>
            <div className="relative w-[257px] h-[29px]">
              <select id="align" className="appearance-none w-full h-[29px] bg-white border border-[#ababab] pl-[3px] pb-1 outline-none">
                <option>居中</option>
              </select>
              <span className="absolute right-0.5 top-px w-[21px] h-[25px] bg-[#e5f1fb] border border-[#0078d7] flex items-center justify-center pointer-events-none">
                <Svg w={10} h={6}><path d="M.5.5L5 5 9.5.5" stroke="#333" /></Svg>
              </span>
              <div className="absolute left-0 top-7 w-full h-[98px] z-20 bg-white border border-[#646464] flex overflow-hidden">
                <ul role="listbox" aria-label="对齐方式" className="flex-1">
                  {alignments.map((a) => (
                    <li
                      key={a}
                      role="option"
                      aria-selected={picked === a}
                      onClick={() => setPicked(a)}
                      className={`h-6 leading-[26px] pl-px border border-dotted ${picked === a ? 'bg-[#99c9ef] border-[#663510]' : 'border-transparent'}`}
                    >
                      {a}
                    </li>
                  ))}
                </ul>
                <div className="w-5 flex flex-col items-center bg-[#f0f0f0]">
                  <div className="h-[21px] flex items-center"><Svg w={10} h={7}><path d="M1 6l4-4.5L9 6" stroke="#505050" strokeWidth="2" /></Svg></div>
                  <div className="w-full h-[43px] bg-[#cdcdcd]" />
                  <div className="flex-1 flex items-center pt-2.5"><Svg w={10} h={7}><path d="M1 1l4 4.5L9 1" stroke="#505050" strokeWidth="2" /></Svg></div>
                </div>
              </div>
            </div>
          </div>
          <Legend>缩进</Legend>
          <div className="flex gap-[21px] pl-[15px] pt-[11px] h-[65px] items-start">
            <Spinner id="before" label="文本前(R):" value="0 mm" labelWidth="w-[75px]" />
            <Spinner id="after" label="文本后(X):" value="0 mm" labelWidth="w-[75px]" />
            <Spinner id="first" label="首行缩进(F):" value="0 mm" labelWidth="w-[88px]" />
          </div>
          <Legend>间距</Legend>
          <div className="flex gap-[21px] pl-[15px] pt-[11px] items-start">
            <Spinner id="spaceBefore" label="段前(B):" value="0 pt" labelWidth="w-[75px]" />
            <Spinner id="spaceAfter" label="段后(E):" value="0 pt" labelWidth="w-[75px]" />
            <Spinner id="lineSpace" label="行距(N):" value="120%" labelWidth="w-[88px]" />
          </div>
        </div>
        <div className="flex items-center pt-3 pb-[11px]">
          <button aria-label="帮助" className="w-[33px] h-[33px] bg-[#e1e1e1] border border-[#ababab] flex items-center justify-center">
            <Svg w={22} h={22}>
              <circle cx="11" cy="11" r="11" fill="#4a7ebb" />
              <path d="M7 8.5c0-5 8-5 8-.5 0 3-4 3-4 6M11 16v2.5" stroke="#fff" strokeWidth="2.4" />
            </Svg>
          </button>
          <div className="flex-1" />
          <button disabled className="w-[111px] h-[33px] pb-px mr-5 bg-[#ccc] border border-[#bfbfbf] text-[#838383]">应用(A)</button>
          <button className="w-[111px] h-[33px] pb-px mr-[11px] bg-[#e1e1e1] border-2 border-[#0078d7]">确定</button>
          <button className="w-[111px] h-[33px] pb-px bg-[#e1e1e1] border border-[#adadad]">取消</button>
        </div>
      </div>
    </div>
  );
};

export default function App() {
  return (
    <div className="relative h-screen overflow-hidden flex flex-col bg-[#eaeaea] text-[15px] leading-5 font-['Open_Sans','Noto_Sans_CJK_SC',sans-serif]">
      <TitleBar />
      <Ribbon />
      <div className="flex-1 min-h-0 flex">
        <ShapesPanel />
        <Workspace />
      </div>
      <StatusBar />
      <Taskbar />
      <TextDialog />
      {/* Floating monitor bubble, half off the right edge */}
      <button aria-label="加速球" className="absolute -right-9 top-[828px] w-[58px] h-[58px] rounded-full border-2 border-[#d8ecd9] bg-[#3fb65a] shadow-[0_0_4px_rgba(0,0,0,0.5)] text-left text-xs font-bold text-white pl-1">41</button>
    </div>
  );
}
